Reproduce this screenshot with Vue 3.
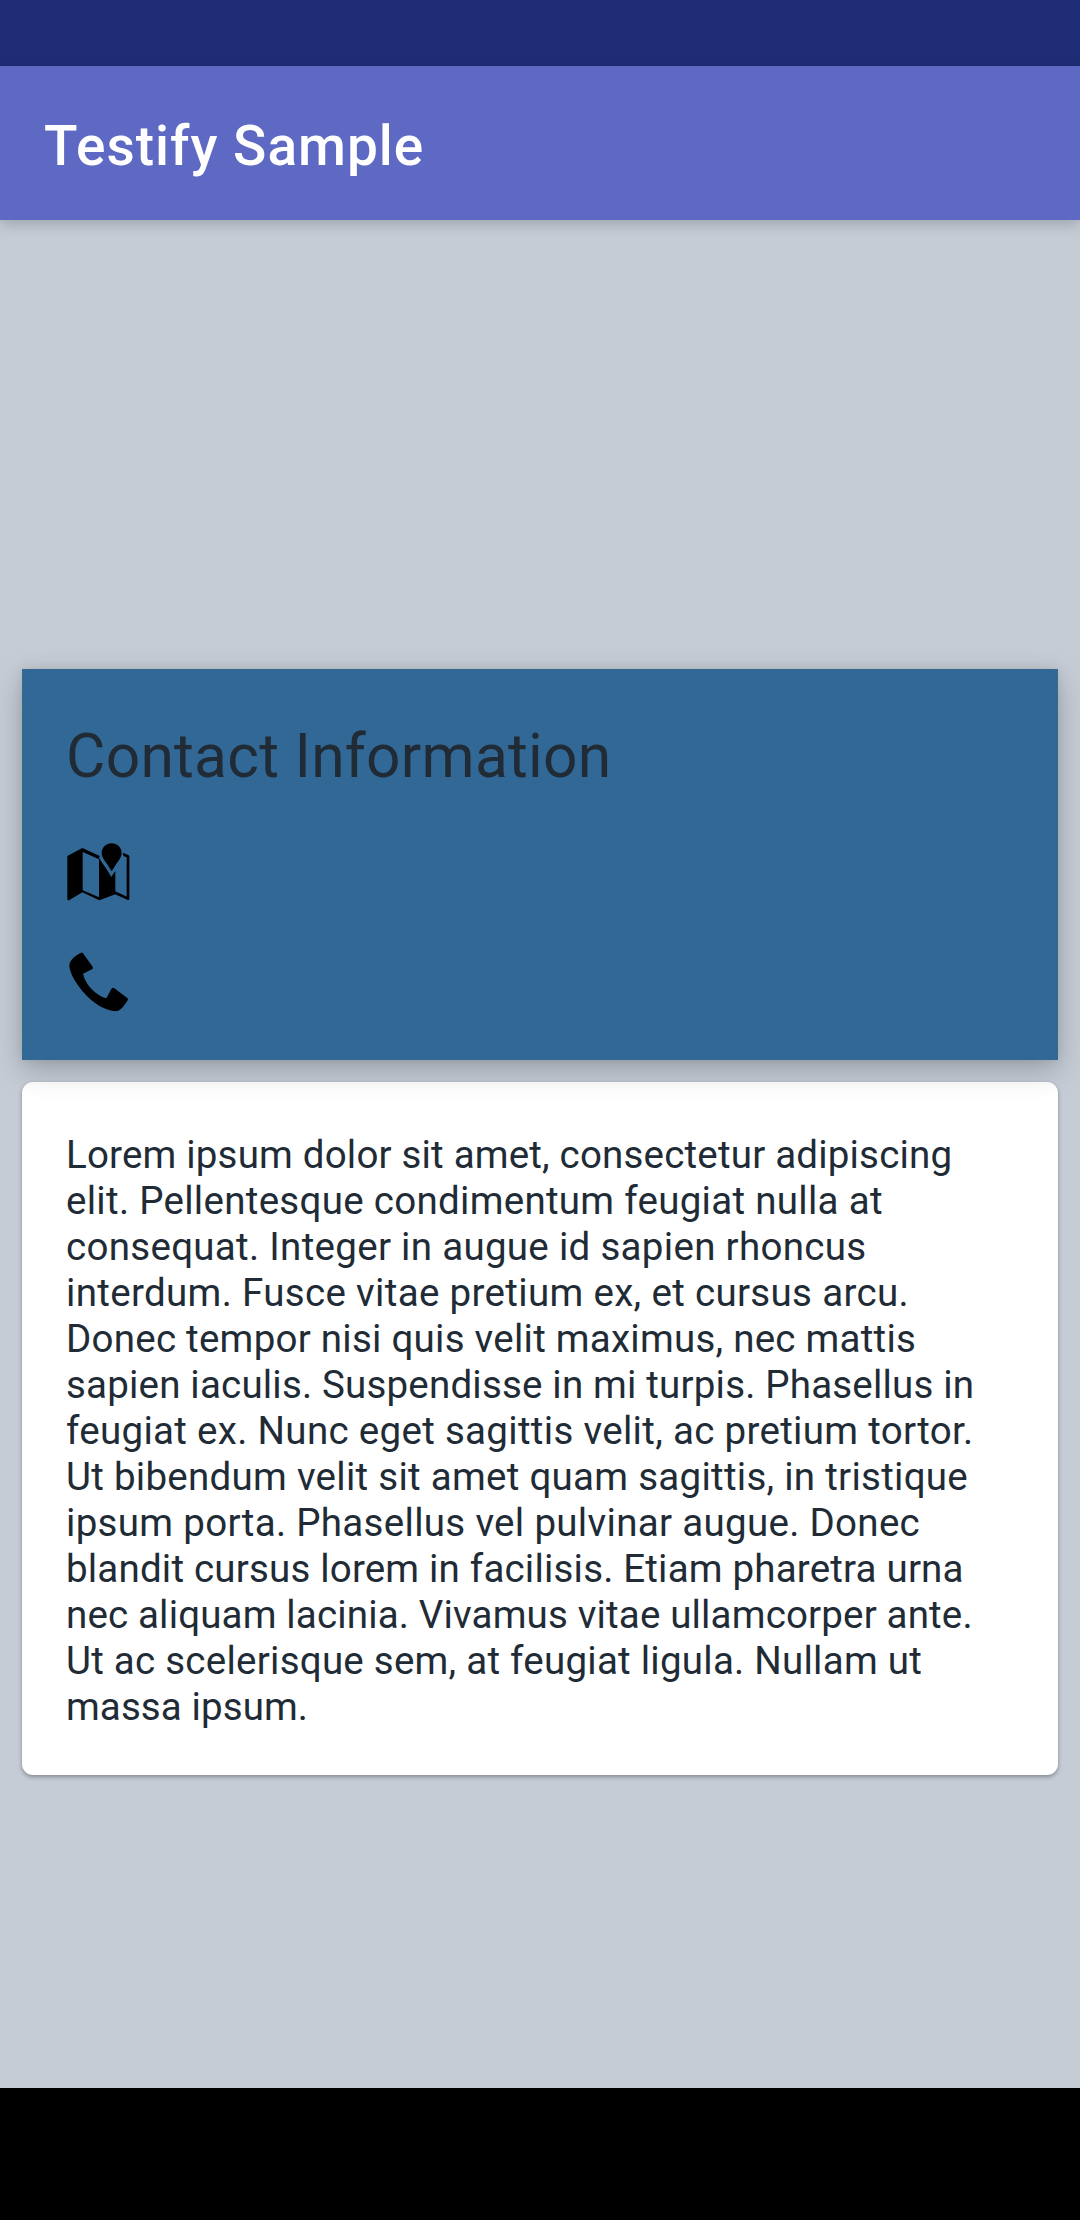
<script setup>
// Each line carries its own tracking, in pixels.
const lines = [
  { text: 'Lorem ipsum dolor sit amet, consectetur adipiscing', tracking: 0.19 },
  { text: 'elit. Pellentesque condimentum feugiat nulla at', tracking: 0.29 },
  { text: 'consequat. Integer in augue id sapien rhoncus', tracking: 0.3 },
  { text: 'interdum. Fusce vitae pretium ex, et cursus arcu.', tracking: 0.33 },
  { text: 'Donec tempor nisi quis velit maximus, nec mattis', tracking: 0.25 },
  { text: 'sapien iaculis. Suspendisse in mi turpis. Phasellus in', tracking: 0.19 },
  { text: 'feugiat ex. Nunc eget sagittis velit, ac pretium tortor.', tracking: 0.31 },
  { text: 'Ut bibendum velit sit amet quam sagittis, in tristique', tracking: 0.275 },
  { text: 'ipsum porta. Phasellus vel pulvinar augue. Donec', tracking: 0.31 },
  { text: 'blandit cursus lorem in facilisis. Etiam pharetra urna', tracking: 0.19 },
  { text: 'nec aliquam lacinia. Vivamus vitae ullamcorper ante.', tracking: 0.16 },
  { text: 'Ut ac scelerisque sem, at feugiat ligula. Nullam ut', tracking: 0.25 },
  { text: 'massa ipsum.', tracking: 0.1 },
]
</script>

<template>
  <div class="screen">
    <div class="status"></div>
    <header class="bar"><h1>Testify Sample</h1></header>
    <main class="content">
      <section class="contact">
        <h2>Contact Information</h2>
        <svg class="icon map" viewBox="48 57 198 198">
          <path d="M52 108 97 84 148 107 184 167 196 152V215L237 234V240L196 223 148 241 97 217 57 241Q52 242 52 236ZM98 96V211L147 232V118Z" fill-rule="evenodd" />
          <path d="M219 98 235 105Q238 107 238 111V235Q238 242 232 239L196 223V214L230 230V112L220 108Z" />
          <path d="M185 70C202 70 215 83 215 99C215 114 202 125 185 154C168 125 155 114 155 99C155 83 168 70 185 70Z" />
          <path class="gap" d="M150 110C155 125 168 135 184 164L197 145" />
        </svg>
        <svg class="icon phone" viewBox="48 57 198 198">
          <path d="M92 69Q96 66 99 70L128 110Q131 115 126 118L99 131C106 163 136 196 169 205L184 177Q188 171 193 175L231 203Q236 206 233 211C226 223 214 239 205 242C193 246 174 241 156 232C111 209 61 146 58 108C58 91 76 76 92 69Z" />
        </svg>
      </section>
      <section class="about">
        <p v-for="line in lines" :key="line.text" :style="{ letterSpacing: line.tracking + 'px' }">{{ line.text }}</p>
      </section>
    </main>
    <footer class="nav"></footer>
  </div>
</template>

<style>
body { margin: 0; }
</style>
<style scoped>
.screen { width: 1080px; height: 2220px; display: flex; flex-direction: column; background: #c5ccd6; font-family: Roboto, sans-serif; overflow: hidden; }
.status { height: 66px; background: #1f2d76; flex: none; }
.bar { height: 154px; flex: none; background: #5d69c2; display: flex; align-items: center; padding: 6px 44px 0; box-sizing: border-box; box-shadow: 0 4px 14px rgba(0,0,0,.2); }
h1 { margin: 0; color: #fff; font-size: 55px; font-weight: 500; letter-spacing: 1px; }
.content { flex: 1; padding: 449px 22px 0; }
.contact { position: relative; z-index: 1; height: 391px; background: #316896; box-sizing: border-box; padding: 44px; box-shadow: 0 10px 28px rgba(0,0,0,.22), 0 0 8px rgba(60,65,30,.12); display: flex; flex-direction: column; }
h2 { margin: 0; padding-top: 2px; font-weight: 400; font-size: 60.5px; line-height: 84px; letter-spacing: .25px; color: #212b36; }
.icon { width: 66px; height: 66px; flex: none; }
.map { margin-top: 40px; }
.gap { fill: none; stroke: #316896; stroke-width: 7; }
.phone { margin-top: 44px; }
.about { margin-top: 22px; height: 693px; border-radius: 11px; background: #fff; box-sizing: border-box; padding: 50px 44px; box-shadow: 0 2px 4px rgba(0,0,0,.32); }
p { margin: 0; white-space: nowrap; font-size: 38.5px; line-height: 46px; color: #212b36; }
.nav { height: 132px; background: #000; flex: none; }
</style>
